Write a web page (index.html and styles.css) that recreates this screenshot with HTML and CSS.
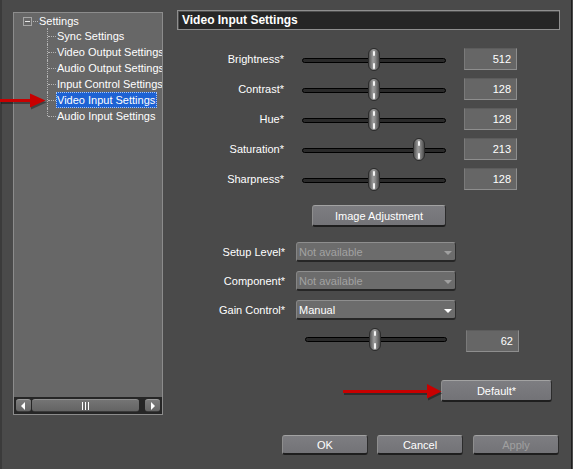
FILE: index.html
```html
<!DOCTYPE html>
<html lang="en">
<head>
<meta charset="utf-8">
<title>Video Input Settings</title>
<link rel="stylesheet" href="styles.css">
</head>
<body>
<div class="window">
  <aside class="sidebar">
    <div class="tree-panel">
      <div class="tree">
        <div class="root"><span class="expander"></span><span class="hdots"></span><span class="root-label">Settings</span></div>
        <ul class="children">
          <li><span class="item">Sync Settings</span></li>
          <li><span class="item">Video Output Settings</span></li>
          <li><span class="item">Audio Output Settings</span></li>
          <li><span class="item">Input Control Settings</span></li>
          <li class="selected"><span class="item">Video Input Settings</span></li>
          <li><span class="item">Audio Input Settings</span></li>
        </ul>
      </div>
      <div class="hscroll">
        <span class="sb-btn sb-left"></span>
        <span class="sb-thumb"><span class="grip"></span></span>
        <span class="sb-btn sb-right"></span>
      </div>
    </div>
  </aside>
  <main class="content">
    <div class="title">Video Input Settings</div>
    <div class="sliders">
      <div class="srow">
        <span class="label">Brightness*</span>
        <div class="slider"><div class="track"></div><span class="thumb" style="left:66px"></span></div>
        <div class="valbox">512</div>
      </div>
      <div class="srow">
        <span class="label">Contrast*</span>
        <div class="slider"><div class="track"></div><span class="thumb" style="left:66px"></span></div>
        <div class="valbox">128</div>
      </div>
      <div class="srow">
        <span class="label">Hue*</span>
        <div class="slider"><div class="track"></div><span class="thumb" style="left:66px"></span></div>
        <div class="valbox">128</div>
      </div>
      <div class="srow">
        <span class="label">Saturation*</span>
        <div class="slider"><div class="track"></div><span class="thumb" style="left:111px"></span></div>
        <div class="valbox">213</div>
      </div>
      <div class="srow">
        <span class="label">Sharpness*</span>
        <div class="slider"><div class="track"></div><span class="thumb" style="left:66px"></span></div>
        <div class="valbox">128</div>
      </div>
    </div>
    <button class="btn btn-image">Image Adjustment</button>
    <div class="selects">
      <div class="drow"><span class="dlabel">Setup Level*</span><div class="dropdown disabled"><span>Not available</span><i class="caret"></i></div></div>
      <div class="drow"><span class="dlabel">Component*</span><div class="dropdown disabled"><span>Not available</span><i class="caret"></i></div></div>
      <div class="drow"><span class="dlabel">Gain Control*</span><div class="dropdown"><span>Manual</span><i class="caret"></i></div></div>
    </div>
    <div class="gain-row">
      <div class="slider gain-slider"><div class="track"></div><span class="thumb" style="left:64px"></span></div>
      <div class="valbox">62</div>
    </div>
    <button class="btn btn-default">Default*</button>
    <div class="footer">
      <button class="btn">OK</button>
      <button class="btn">Cancel</button>
      <button class="btn disabled">Apply</button>
    </div>
  </main>
  <svg class="arrow arrow-tree" width="50" height="22" viewBox="0 0 50 22">
    <g fill="#000" opacity="0.35" transform="translate(1,2)">
      <rect x="0" y="9" width="32" height="3"/>
      <polygon points="30,3.5 45.5,10.5 30,17.5"/>
    </g>
    <g fill="#c80000">
      <rect x="0" y="9" width="32" height="3"/>
      <polygon points="30,3.5 45.5,10.5 30,17.5"/>
    </g>
  </svg>
  <svg class="arrow arrow-default" width="106" height="22" viewBox="0 0 106 22">
    <g fill="#000" opacity="0.35" transform="translate(1,2)">
      <rect x="3" y="10" width="86" height="3"/>
      <polygon points="87,4 101.5,11.5 87,18.5"/>
    </g>
    <g fill="#c80000">
      <rect x="3" y="10" width="86" height="3"/>
      <polygon points="87,4 101.5,11.5 87,18.5"/>
    </g>
  </svg>
</div>
</body>
</html>
```

FILE: styles.css
```css
* { box-sizing: border-box; }
html, body { margin: 0; padding: 0; }
body {
  width: 573px;
  height: 469px;
  overflow: hidden;
  background: #4a4a4a;
  font-family: "Liberation Sans", Arial, sans-serif;
  font-size: 11px;
  color: #fff;
}
.window {
  position: relative;
  display: flex;
  width: 573px;
  height: 469px;
  border-left: 2px solid #3b3b3b;
}

/* ---------- sidebar tree ---------- */
.sidebar {
  width: 175px;
  flex: none;
  padding: 12px 0 0 11px;
}
.tree-panel {
  width: 150px;
  height: 403px;
  background: #676767;
  border: 1px solid #8c8c8c;
  display: flex;
  flex-direction: column;
}
.tree {
  flex: 1;
  overflow: hidden;
  padding: 1px 0 0 9px;
  white-space: nowrap;
}
.root {
  display: flex;
  align-items: center;
  height: 14px;
}
.expander {
  position: relative;
  width: 9px;
  height: 9px;
  border: 1px solid #a6a6a6;
  flex: none;
}
.expander::after {
  content: "";
  position: absolute;
  left: 1px;
  top: 3px;
  width: 5px;
  height: 1px;
  background: #e8e8e8;
}
.hdots {
  width: 5px;
  margin: 0 1px;
  border-top: 1px dotted #b4b4b4;
}
.root-label { line-height: 14px; }
.children {
  list-style: none;
  margin: 0 0 0 24px;
  padding: 0;
}
.children li {
  position: relative;
  height: 16px;
  line-height: 16px;
  padding-left: 9px;
}
.children li::before {
  content: "";
  position: absolute;
  left: 0;
  top: 0;
  bottom: 0;
  border-left: 1px dotted #b4b4b4;
}
.children li:last-child::before { bottom: 8px; }
.children li::after {
  content: "";
  position: absolute;
  left: 1px;
  top: 8px;
  width: 8px;
  border-top: 1px dotted #b4b4b4;
}
.item {
  display: inline-block;
  height: 16px;
  padding: 0 2px 0 1px;
}
.selected .item {
  background: #1d62d3;
  outline: 1px dotted #a9c6f5;
  outline-offset: -1px;
}

.hscroll {
  flex: none;
  height: 17px;
  background: #262626;
  display: flex;
  align-items: center;
  padding: 0 2px;
}
.sb-btn {
  position: relative;
  width: 15px;
  height: 13px;
  border-radius: 3px;
  background: linear-gradient(#7c7c7c, #666);
  border-top: 1px solid #9a9a9a;
  border-bottom: 1px solid #3a3a3a;
}
.sb-btn::after {
  content: "";
  position: absolute;
  top: 2px;
  width: 0;
  height: 0;
  border-top: 4px solid transparent;
  border-bottom: 4px solid transparent;
}
.sb-left::after { left: 5px; border-right: 4px solid #fff; }
.sb-right::after { left: 6px; border-left: 4px solid #fff; }
.sb-thumb {
  width: 107px;
  height: 13px;
  margin: 0 6px 0 1px;
  border-radius: 3px;
  background: linear-gradient(#747474, #646464);
  border-top: 1px solid #8e8e8e;
  border-bottom: 1px solid #3a3a3a;
  display: flex;
  align-items: center;
  justify-content: center;
}
.grip {
  width: 7px;
  height: 8px;
  background: linear-gradient(90deg, #fff 0 1px, transparent 1px 3px, #fff 3px 4px, transparent 4px 6px, #fff 6px 7px);
}

/* ---------- main content ---------- */
.content {
  flex: 1;
  display: flex;
  flex-direction: column;
  align-items: flex-start;
  padding-top: 10px;
  margin-right: 1px;
  border-right: 1px solid #1f1f1f;
}
.title {
  width: 383px;
  height: 20px;
  background: #262626;
  border: 1px solid #8f8f8f;
  box-shadow: inset 1px 1px 0 #4e4e4e;
  font-weight: bold;
  font-size: 12px;
  line-height: 18px;
  padding-left: 4px;
}
.sliders { margin-top: 14px; }
.srow {
  display: flex;
  height: 30px;
}
.label {
  width: 107px;
  margin-right: 18px;
  text-align: right;
  line-height: 31px;
}
.slider {
  position: relative;
  width: 144px;
  height: 30px;
  margin-right: 18px;
}
.track {
  margin-top: 14px;
  height: 5px;
  background: #2a2a2a;
  border: 1px solid #000;
  border-radius: 3px;
}
.thumb {
  position: absolute;
  top: 4px;
  width: 12px;
  height: 23px;
  border-radius: 6px;
  border: 1px solid #2b2b2b;
  background: linear-gradient(90deg, #545454, #9c9c9c 40%, #8a8a8a 60%, #4c4c4c);
}
.thumb::before,
.thumb::after {
  content: "";
  position: absolute;
  left: 4px;
  width: 2px;
  height: 5px;
  border-radius: 1px;
  background: #f4f4f4;
}
.thumb::before { top: 2px; }
.thumb::after { top: 14px; height: 6px; }
.valbox {
  width: 53px;
  height: 22px;
  margin-top: 4px;
  background: #666;
  border: 1px solid #8e8e8e;
  border-top-color: #5c5c5c;
  border-left-color: #7a7a7a;
  text-align: right;
  padding-right: 5px;
  line-height: 20px;
}

.btn {
  font-family: "Liberation Sans", Arial, sans-serif;
  font-size: 11px;
  color: #fff;
  padding: 0;
  background: linear-gradient(#7d7d81, #737377);
  border: 1px solid #5a5a5a;
  border-top-color: #a2a2a2;
  border-left-color: #8e8e8e;
  border-right-color: #2c2c2c;
  border-bottom: 2px solid #1e1e1e;
  border-radius: 3px;
}
.btn.disabled { color: #a0a0a0; }
.btn-image {
  margin: 11px 0 0 135px;
  width: 134px;
  height: 22px;
}
.selects {
  margin-top: 15px;
  display: flex;
  flex-direction: column;
  gap: 9px;
}
.drow {
  display: flex;
  align-items: center;
  height: 20px;
}
.dlabel {
  width: 108px;
  margin-right: 11px;
  text-align: right;
}
.dropdown {
  width: 160px;
  height: 20px;
  display: flex;
  align-items: center;
  justify-content: space-between;
  padding: 0 3px 0 2px;
  background: #6c6c6c;
  border: 1px solid #4a4a4a;
  border-top-color: #8e8e8e;
  border-left-color: #858585;
  border-right-color: #2e2e2e;
  border-bottom: 2px solid #262626;
  border-radius: 3px;
}
.dropdown.disabled { color: #a2a2a2; }
.caret {
  width: 0;
  height: 0;
  margin-top: 3px;
  border-left: 4px solid transparent;
  border-right: 4px solid transparent;
  border-top: 4px solid #fff;
}
.dropdown.disabled .caret { border-top-color: #a0a0a0; }

.gain-row {
  display: flex;
  height: 24px;
  margin: 8px 0 0 128px;
}
.gain-slider {
  width: 142px;
  height: 24px;
  margin-right: 19px;
}
.gain-slider .track { margin-top: 9px; }
.gain-slider .thumb { top: 0; }
.gain-row .valbox { margin-top: 2px; }

.btn-default {
  margin: 28px 0 0 264px;
  width: 111px;
  height: 22px;
}
.footer {
  display: flex;
  gap: 9px;
  margin: 33px 0 0 105px;
}
.footer .btn {
  width: 86px;
  height: 20px;
}
.footer .btn:last-child { margin-left: 1px; }

/* ---------- annotation arrows ---------- */
.arrow { position: absolute; }
.arrow-tree { left: -2px; top: 90px; }
.arrow-default { left: 338px; top: 380px; }
```
